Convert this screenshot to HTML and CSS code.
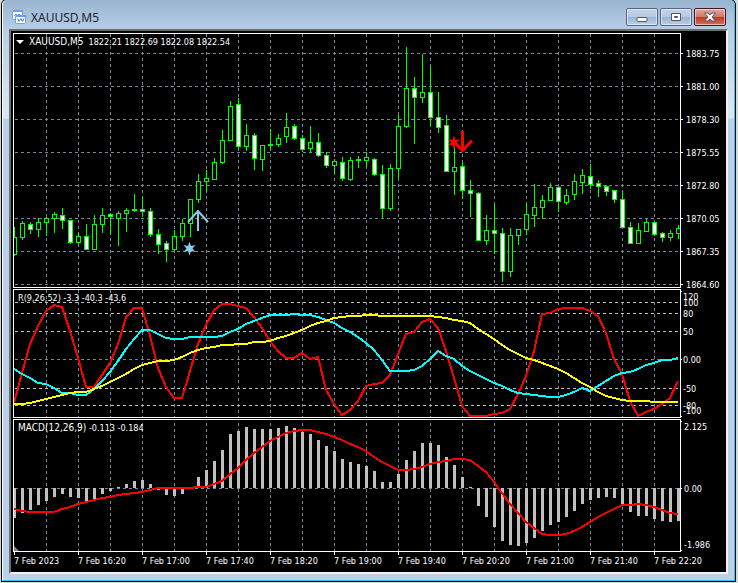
FILE: index.html
```html
<!DOCTYPE html>
<html lang="en">
<head>
  <meta charset="UTF-8" />
  <meta name="viewport" content="width=device-width, initial-scale=1.0"/>
  <title>XAUUSD,M5</title>
  <link rel="stylesheet" href="styles.css">
</head>
<body>

<main class="window">
  <header class="titlebar">
    <svg class="app-icon" width="15" height="15" viewBox="0 0 15 15">
      <rect x="0.500" y="0.500" width="10" height="9" rx="1" fill="#fff" stroke="#6c9de6"/>
      <rect x="1" y="0" width="10" height="2" fill="#6c9de6"/>
      <path d="M2.500 6l1.500-2 1.500 2.500 1.500-2.500 1 1.500" fill="none" stroke="#3f78d8"/>
      <rect x="3.500" y="5.500" width="10" height="8" rx="1" fill="#fff" stroke="#6c9de6"/>
      <rect x="4" y="5" width="10" height="2" fill="#6c9de6"/>
      <path d="M5.500 8.500l1.500 3 2-3 1.500 3 1.500-3" fill="none" stroke="#3f78d8"/>
    </svg>
    <h1>XAUUSD,M5</h1>
    <div class="controls">
      <button class="control" aria-label="Minimize">
        <svg width="12" height="12" viewBox="0 0 12 12"><rect x="1" y="6.500" width="10" height="4" rx="1" fill="#fff" stroke="#535666"/></svg>
      </button>
      <button class="control" aria-label="Maximize">
        <svg width="12" height="12" viewBox="0 0 12 12"><path d="M1.500 2.500h9v7h-9zM4.500 5.500h3v1h-3z" fill="#fff" fill-rule="evenodd" stroke="#535666"/></svg>
      </button>
      <button class="control close" aria-label="Close">
        <svg width="12" height="12" viewBox="0 0 12 12"><path d="M.5 2h3.500l2 2 2-2h3.500L8 6l3.500 4H8L6 8l-2 2H.5L4 6z" fill="#fff" stroke="#535666"/></svg>
      </button>
    </div>
  </header>

  <div class="client">
    <section class="row">
      <div class="plot price">
        <svg id="pricePlot" viewBox="14 34 666 253" preserveAspectRatio="none"></svg>
        <div class="legend symbol">
          <button class="toggle" aria-label="One click trading"></button>
          <span class="name">XAUUSD,M5</span>
          <span>1822.21 1822.69 1822.08 1822.54</span>
        </div>
      </div>
      <svg class="axis" id="priceAxis" width="45" height="255" viewBox="0 33 45 255"></svg>
    </section>

    <section class="row">
      <div class="plot range">
        <svg id="rangePlot" viewBox="14 290 666 127" preserveAspectRatio="none"></svg>
        <div class="legend">R(9,26,52) -3.3 -40.3 -43.6</div>
      </div>
      <svg class="axis" id="rangeAxis" width="45" height="129" viewBox="0 289 45 129"></svg>
    </section>

    <section class="row">
      <div class="plot macd">
        <svg id="macdPlot" viewBox="14 420 666 131" preserveAspectRatio="none"></svg>
        <div class="legend"><span class="name">MACD(12,26,9)</span> -0.113 -0.184</div>
      </div>
      <svg class="axis" id="macdAxis" width="45" height="133" viewBox="0 419 45 133"></svg>
    </section>

    <div class="times">
      <span>7 Feb 2023</span>
      <span>7 Feb 16:20</span>
      <span>7 Feb 17:00</span>
      <span>7 Feb 17:40</span>
      <span>7 Feb 18:20</span>
      <span>7 Feb 19:00</span>
      <span>7 Feb 19:40</span>
      <span>7 Feb 20:20</span>
      <span>7 Feb 21:00</span>
      <span>7 Feb 21:40</span>
      <span>7 Feb 22:20</span>
    </div>
  </div>
</main>

<script src="chart.js"></script>
</body>
</html>
```
FILE: styles.css
```css
:root {
  --frame: #b9d1ea;
  --grid: #778899;
  --level: #c0c0c0;
  --up: #00ff00;
}

* {
  margin: 0;
  padding: 0;
  box-sizing: border-box;
}

body {
  background: #d8d8d8;
  font-family: "DejaVu Sans Condensed", "DejaVu Sans", sans-serif;
  font-size: 9px;
  color: #fff;
}

.window {
  margin: 0 3px 2px 2px;
  padding: 0 6px 6px;
  border: solid #fff;
  border-width: 0 1px 1px;
  border-right-color: #2fc4ea;
  border-bottom-color: #2fc4ea;
  border-radius: 5px 5px 0 0;
  background: linear-gradient(#99b4d1, #b7cde7 29px, #dce7f4 118px, var(--frame) 119px);
  box-shadow: 0 0 0 1px #000;
}

.titlebar {
  display: flex;
  align-items: center;
  height: 29px;
  padding: 5px 2px 0 3px;
}

.titlebar h1 {
  flex: 1;
  margin-left: 4px;
  font-family: "Noto Sans", "Open Sans", sans-serif;
  font-size: 12px;
  font-weight: 400;
  color: #1c2430;
}

.controls {
  display: flex;
  gap: 2px;
}

.control {
  display: flex;
  align-items: center;
  justify-content: center;
  width: 32px;
  height: 18px;
  border: 1px solid #566784;
  border-radius: 2px;
  background: linear-gradient(#c3d4e8, #b5c9e0 50%, #98b3d2 50%, #b9d0ea);
  box-shadow: inset 0 0 0 1px rgba(255, 255, 255, 0.5);
}

.control.close {
  border-color: #431422;
  background: linear-gradient(#e3a59b, #d1796a 50%, #b83a22 50%, #d3705a);
}

.client {
  padding: 2px 0 0 2px;
  border: 2px solid #f4f2ee;
  border-top-color: #6d6d6d;
  border-left-color: #6d6d6d;
  background: #000;
}

.row {
  display: flex;
  margin-bottom: 1px;
}

.row:nth-of-type(3) {
  margin-bottom: 0;
}

.plot {
  position: relative;
  flex: 1;
  border: 1px solid #fff;
}

.plot svg {
  display: block;
  width: 100%;
  height: 100%;
}

.price { height: 255px; }
.range { height: 129px; }
.macd { height: 133px; }

.legend {
  position: absolute;
  top: 2px;
  left: 4px;
  line-height: 12px;
  white-space: nowrap;
}

.name {
  font-size: 10px;
}

.symbol {
  display: flex;
  align-items: center;
  gap: 5px;
  left: 2px;
}

.toggle {
  border: 4px solid transparent;
  border-top-color: #fff;
  border-bottom: 0;
  background: none;
}

.axis {
  flex: none;
  overflow: visible;
}

.axis text {
  fill: #fff;
}

.times {
  display: grid;
  grid-template-columns: repeat(10, minmax(0, 64fr)) minmax(0, 26fr);
  height: 20px;
  margin: 0 46px 0 1px;
  line-height: 12px;
  white-space: nowrap;
}

.times span {
  display: block;
  text-indent: -1px;
}

.times span::before {
  content: "";
  display: block;
  width: 1px;
  height: 3px;
  background: #fff;
}

/* chart parts */
svg line, svg rect, svg polyline {
  shape-rendering: crispEdges;
}

.app-icon rect, .control rect {
  shape-rendering: auto;
}

.grid, .level {
  stroke: var(--grid);
  stroke-dasharray: 3 3;
}

.level { stroke: var(--level); }
.tick { stroke: #fff; }
.wick { stroke: var(--up); }
.bull { fill: #000; stroke: var(--up); }
.bear { fill: #fff; stroke: var(--up); }
.bar { fill: var(--level); }

.curve {
  fill: none;
  stroke-width: 2;
}

.red { stroke: #ff0000; }
.aqua { stroke: #00ffff; }
.yellow { stroke: #ffff00; }

.buy { stroke: #87ceeb; fill: none; stroke-width: 2; }
.sell { stroke: #ff0000; fill: none; stroke-width: 3; }
.buy-star { fill: #87ceeb; }
.sell-star { fill: #ff0000; }
```
FILE: chart.js
```js
const NS = "http://www.w3.org/2000/svg";
const LEFT = 14;
const RIGHT = 680;
const STEP = 8;

// high, body top, body bottom, low, 1 = bearish
const candles = [
  [227,237,254,255,0],[221,223,237,239,0],[222,224,229,233,1],[218,222,229,236,0],
  [217,218,222,235,0],[212,214,218,232,0],[208,215,220,228,1],[220,220,242,243,1],
  [233,236,242,243,0],[224,236,249,249,1],[215,224,249,249,0],[208,215,224,232,0],
  [213,214,216,233,1],[211,213,218,245,0],[208,210,213,231,0],[194,209,210,211,0],
  [197,209,211,216,1],[208,211,234,236,1],[229,234,244,253,1],[241,243,249,261,1],
  [230,236,249,250,0],[219,223,236,240,0],[199,199,223,236,0],[174,181,199,202,0],
  [170,178,181,191,0],[158,162,179,179,0],[130,140,162,163,0],[101,106,140,140,0],
  [98,104,146,149,1],[124,135,146,150,0],[133,135,158,169,1],[145,145,159,170,0],
  [129,144,145,149,0],[134,138,144,146,0],[113,127,136,142,0],[124,126,138,139,1],
  [135,138,149,151,1],[126,142,148,152,0],[133,142,155,156,1],[152,155,165,167,1],
  [159,161,165,172,0],[157,162,178,180,1],[157,160,179,180,0],[156,159,160,167,0],
  [152,157,160,166,0],[158,159,174,175,1],[165,174,208,217,1],[164,168,208,210,0],
  [115,126,168,177,0],[47,88,126,127,0],[77,88,97,143,1],[54,92,97,102,0],
  [66,92,117,125,1],[92,117,127,132,1],[115,125,171,171,1],[147,167,171,194,0],
  [162,166,190,198,1],[180,190,193,216,1],[192,193,240,240,1],[215,230,240,244,0],
  [204,230,233,253,1],[228,233,271,281,1],[228,235,271,276,0],[229,229,235,244,0],
  [203,214,229,234,0],[184,207,215,226,0],[195,200,207,218,0],[183,187,200,200,0],
  [186,187,201,211,1],[189,195,202,204,0],[174,181,194,199,0],[169,175,182,193,0],
  [164,176,184,188,1],[180,183,186,196,1],[185,186,191,195,1],[190,190,199,202,1],
  [191,199,227,227,1],[222,227,243,243,1],[223,230,243,243,0],[219,222,231,231,0],
  [222,222,234,235,1],[232,233,237,241,1],[230,233,237,240,0],[225,228,233,238,0]
];

const fast = [402,372,343,325,310,304,306,330,357,386,386,374,362,343,316,307,307,335,367,386,397,397,370,343,324,309,303,303,305,307,316,327,340,350,357,357,352,358,356,389,403,414,409,400,385,383,382,374,353,333,331,321,318,327,350,377,405,415,415,415,413,412,408,393,375,350,313,312,308,307,307,307,310,315,332,358,373,400,415,411,408,403,397,380];
const middle = [368,373,377,382,383,387,392,392,394,394,388,380,371,360,348,338,329,329,333,337,338,338,336,336,336,336,335,331,328,323,320,317,314,314,314,313,314,314,316,319,322,327,331,336,342,349,359,370,370,370,369,365,358,350,355,358,365,370,374,378,382,385,389,392,393,394,395,396,396,394,391,387,390,385,380,375,372,371,368,364,362,359,359,357];
const slow = [403,403,402,400,398,396,394,392,391,391,388,385,381,377,373,368,364,362,360,360,359,356,352,349,347,346,344,344,343,343,341,341,340,337,335,332,329,325,322,320,317,316,315,315,314,314,315,315,315,315,315,315,315,316,317,319,320,322,328,333,338,344,349,353,357,359,362,365,368,372,377,382,386,391,395,397,399,400,400,400,401,401,401,401];

const histogram = [518,513,510,505,501,497,494,497,498,501,499,494,491,487,484,481,480,484,490,495,496,494,489,477,470,461,450,434,431,427,429,429,429,428,426,428,432,434,440,446,451,459,462,464,466,471,482,482,474,460,451,443,443,445,457,465,477,487,506,517,527,541,545,546,543,538,531,525,522,517,511,504,500,498,497,498,504,512,516,516,519,521,522,521];
const signal = [508,510,511,511,511,511,508,506,503,501,499,497,496,494,493,492,491,489,487,487,487,487,487,486,486,483,480,473,467,459,452,446,440,436,432,430,429,429,431,433,436,439,443,446,450,456,461,465,469,469,468,466,463,461,460,458,458,459,465,471,481,492,503,512,521,527,533,534,534,533,530,526,521,516,512,508,504,504,503,504,506,509,512,513];

function add(parent, tag, attrs, text) {
  const el = document.createElementNS(NS, tag);
  for (const key in attrs) el.setAttribute(key, attrs[key]);
  if (text) el.textContent = text;
  parent.appendChild(el);
  return el;
}

function hline(svg, y, cls) {
  add(svg, "line", { x1: LEFT + 1, x2: RIGHT, y1: y + 0.5, y2: y + 0.5, class: cls });
}

function vgrid(svg, top, bottom) {
  for (let x = 46; x < RIGHT; x += 32) {
    add(svg, "line", { x1: x + 0.5, x2: x + 0.5, y1: top, y2: bottom, class: "grid" });
  }
}

function curve(svg, values, color) {
  const points = values.map((y, i) => `${LEFT + i * STEP},${y + 1}`).join(" ");
  add(svg, "polyline", { points: points, class: "curve " + color });
}

function labels(svg, x, rows) {
  rows.forEach(([y, text]) => add(svg, "text", { x: x, y: y + 4 }, text));
}

function ticks(svg, length, rows) {
  rows.forEach(y => add(svg, "line", { x1: 0, x2: length, y1: y + 0.5, y2: y + 0.5, class: "tick" }));
}

function star(svg, cx, cy, cls) {
  const points = [];
  for (let i = 0; i < 12; i++) {
    const r = i % 2 ? 3 : 7;
    const a = i * Math.PI / 6 - Math.PI / 2;
    points.push(`${cx + r * Math.cos(a)},${cy + r * Math.sin(a)}`);
  }
  add(svg, "polygon", { points: points.join(" "), class: cls });
}

// Price
const price = document.getElementById("pricePlot");
const prices = ["1883.75", "1881.00", "1878.30", "1875.55", "1872.80", "1870.05", "1867.35", "1864.60"]
  .map((text, i) => [53 + i * 33, text]);

prices.forEach(([y]) => hline(price, y, "grid"));
vgrid(price, 34, 287);
candles.forEach(([high, top, bottom, low, bear], i) => {
  const x = LEFT + i * STEP;
  add(price, "line", { x1: x + 0.5, x2: x + 0.5, y1: high, y2: low + 1, class: "wick" });
  add(price, "rect", { x: x - 1.5, y: top + 0.5, width: 4, height: bottom - top, class: bear ? "bear" : "bull" });
});
add(price, "path", { d: "M198 231V211M188 222l10-11 10 11", class: "buy" });
star(price, 189.5, 248.5, "buy-star");
add(price, "path", { d: "M462.500 131V151M454 142l8.500 8.500 9.500-10", class: "sell" });
star(price, 454, 142.5, "sell-star");

const priceAxis = document.getElementById("priceAxis");
ticks(priceAxis, 2, prices.map(p => p[0]));
labels(priceAxis, 5, prices);

// Range oscillator
const range = document.getElementById("rangePlot");
vgrid(range, 290, 417);
hline(range, 359, "grid");
[302, 313, 331, 388, 405].forEach(y => hline(range, y, "level"));
curve(range, fast, "red");
curve(range, middle, "aqua");
curve(range, slow, "yellow");

const rangeAxis = document.getElementById("rangeAxis");
ticks(rangeAxis, 1, [291, 359, 416]);
labels(rangeAxis, 2, [[296, "120"], [302, "100"], [313, "80"], [331, "50"], [359, "0.00"], [388, "-50"], [405, "-80"], [410, "-100"]]);

// MACD
const macd = document.getElementById("macdPlot");
vgrid(macd, 423, 551);
hline(macd, 488, "grid");
histogram.forEach((y, i) => {
  add(macd, "rect", { x: LEFT + i * STEP - 1, y: Math.min(y, 488), width: 3, height: Math.abs(y - 488), class: "bar" });
});
curve(macd, signal, "red");
add(macd, "path", { d: "M14 546l5 5h-5z", fill: "#778899" });

const macdAxis = document.getElementById("macdAxis");
ticks(macdAxis, 1, [421, 488, 550]);
labels(macdAxis, 3, [[426, "2.125"], [488, "0.00"], [544, "-1.986"]]);
```
